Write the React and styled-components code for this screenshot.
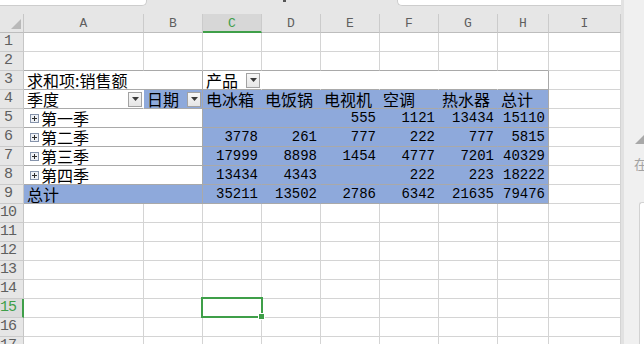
import React from 'react';
import styled, { createGlobalStyle } from 'styled-components';

const GRID = '#d4d4d4';
const PIV = '#a9a9a9';
const BLUE = '#8ea9db';
const GREEN = '#3f9f49';
const CLEAR = 'transparent';

const GlobalStyle = createGlobalStyle`
  html, body {
    margin: 0;
    padding: 0;
    background: #ffffff;
    overflow: hidden;
  }
`;

const Screen = styled.div`
  display: flex;
  width: 644px;
  height: 344px;
  overflow: hidden;
  font-family: 'Noto Sans CJK SC', sans-serif;
`;

const SheetArea = styled.div`
  display: flex;
  flex-direction: column;
  width: 621px;
  flex: none;
`;

const TopStrip = styled.div`
  display: flex;
  align-items: flex-start;
  height: 14px;
  background: #e6e6e6;
  flex: none;
`;

const TabBox = styled.div`
  height: 5px;
  width: ${p => (p.$width ? `${p.$width}px` : 'auto')};
  flex: ${p => (p.$width ? 'none' : '1')};
  background: #fff;
  border-bottom: 1px solid #cdcdcd;
  border-${p => p.$side}: 1px solid #cdcdcd;
  border-bottom-${p => p.$side}-radius: 5px;
`;

const StripGap = styled.div`
  flex: 1;
  display: flex;
  justify-content: center;
  padding-left: 26px;
`;

const StripDot = styled.div`
  width: 3px;
  height: 2px;
  background: #555;
`;

const Grid = styled.div`
  display: grid;
  grid-template-columns: 24px 120px 59px 59px 59px 59px 59px 59px 51px 72px;
  grid-auto-rows: 19px;
`;

const Corner = styled.div`
  background: #e6e6e6;
  border-right: 1px solid #c6c6c6;
  border-bottom: 1px solid #bdbdbd;
  display: flex;
  align-items: flex-end;
  justify-content: flex-end;
  padding: 0 2px 3px 0;
`;

const ColHead = styled.div`
  background: ${p => (p.$active ? '#d7d7d7' : '#e6e6e6')};
  border-right: 1px solid #cbcbcb;
  border-bottom: ${p => (p.$active ? `2px solid ${GREEN}` : '1px solid #bdbdbd')};
  color: ${p => (p.$active ? GREEN : '#5f5f5f')};
  font-family: 'Liberation Mono', monospace;
  font-size: 13px;
  display: flex;
  align-items: center;
  justify-content: center;
  padding-top: 1px;
`;

const RowHead = styled.div`
  background: ${p => (p.$active ? '#dcdcdc' : '#e6e6e6')};
  border-right: ${p => (p.$active ? `2px solid ${GREEN}` : '1px solid #c6c6c6')};
  border-bottom: 1px solid #cbcbcb;
  color: ${p => (p.$active ? GREEN : '#5f5f5f')};
  font-family: 'Liberation Mono', monospace;
  font-size: 15px;
  line-height: 18px;
  display: flex;
  align-items: center;
  justify-content: center;
  padding-right: ${p => (p.$active ? 6 : 7)}px;
  letter-spacing: -1px;
  overflow: hidden;
`;

const Cell = styled.div`
  grid-column: span ${p => p.$span || 1};
  position: relative;
  display: flex;
  align-items: center;
  justify-content: ${p => (p.$num ? 'flex-end' : p.$drop ? 'space-between' : 'flex-start')};
  background: ${p => (p.$blue ? BLUE : '#ffffff')};
  border-right: 1px solid ${p => p.$r || GRID};
  border-bottom: 1px solid ${p => p.$b || GRID};
  padding: 0 ${p => (p.$drop ? 1 : 3)}px 0 ${p => (p.$indent ? 6 : 3)}px;
  font-size: ${p => (p.$num ? '14px' : '16px')};
  font-family: ${p =>
    p.$num ? "'Liberation Mono', monospace" : "'Noto Sans CJK SC', sans-serif"};
  color: #000;
  line-height: 18px;
  white-space: nowrap;
`;

const Label = styled.span`
  margin-left: ${p => p.$gap || 0}px;
`;

const DropButton = styled.div`
  width: 14px;
  height: 15px;
  flex: none;
  box-sizing: border-box;
  border: 1px solid #a2a2a2;
  background: linear-gradient(#f7f7f7, #e6e6e6);
  display: flex;
  align-items: center;
  justify-content: center;
`;

const Selection = styled.div`
  position: absolute;
  top: -2px;
  left: -2px;
  right: -2px;
  bottom: -1px;
  border: 2px solid ${GREEN};
  z-index: 2;
  pointer-events: none;
`;

const FillHandle = styled.div`
  position: absolute;
  right: -4px;
  bottom: -4px;
  width: 5px;
  height: 5px;
  background: ${GREEN};
  border: 1px solid #fff;
`;

const SidePanel = styled.div`
  flex: 1;
  display: flex;
  flex-direction: column;
  background: #f0f0f0;
  border-left: 3px solid #e2e2e2;
  padding-left: 10px;
  overflow: hidden;
`;

const PanelTri = styled.svg`
  margin-top: 135px;
  margin-left: 1px;
  flex: none;
`;

const PanelHint = styled.div`
  margin-top: 12px;
  font-size: 13px;
  line-height: 15px;
  color: #a3a3a3;
  white-space: nowrap;
`;

const PanelBox = styled.div`
  margin-top: 31px;
  margin-left: 5px;
  flex: 1;
  background: #fff;
  border-left: 1px solid #d2d2d2;
  border-top: 1px solid #d2d2d2;
  border-top-left-radius: 3px;
`;

const letters = ['A', 'B', 'C', 'D', 'E', 'F', 'G', 'H', 'I'];
const products = ['电冰箱', '电饭锅', '电视机', '空调', '热水器', '总计'];
const quarters = [
  ['第一季', ['', '', '555', '1121', '13434', '15110']],
  ['第二季', ['3778', '261', '777', '222', '777', '5815']],
  ['第三季', ['17999', '8898', '1454', '4777', '7201', '40329']],
  ['第四季', ['13434', '4343', '', '222', '223', '18222']],
];
const totals = ['35211', '13502', '2786', '6342', '21635', '79476'];

function Drop() {
  return (
    <DropButton>
      <svg width="7" height="4" viewBox="0 0 7 4">
        <polygon points="0,0 7,0 3.5,4" fill="#3a3a3a" />
      </svg>
    </DropButton>
  );
}

function Expand() {
  return (
    <svg width="9" height="9" viewBox="0 0 9 9" style={{ flex: 'none' }}>
      <rect x="0.5" y="0.5" width="8" height="8" fill="#eef1f6" stroke="#8593ab" />
      <path d="M2 4.5h5M4.5 2v5" stroke="#2b2b2b" strokeWidth="1" />
    </svg>
  );
}

function PlainRow({ n, pivotTop }) {
  return letters.map((l, i) => (
    <Cell key={l} $b={pivotTop && i < 8 ? PIV : GRID}>
      {n === 15 && l === 'C' && (
        <Selection>
          <FillHandle />
        </Selection>
      )}
    </Cell>
  ));
}

function ValueCells({ values }) {
  return values.map((v, i) => (
    <Cell key={i} $blue $num $r={i === 5 ? PIV : CLEAR} $b={PIV}>
      {v}
    </Cell>
  ));
}

function renderRow(n) {
  if (n === 3) {
    return (
      <>
        <Cell $span={2} $r={PIV} $b={PIV}>求和项:销售额</Cell>
        <Cell $drop $r={CLEAR} $b={PIV}>
          产品
          <Drop />
        </Cell>
        {[0, 1, 2, 3].map(i => (
          <Cell key={i} $r={CLEAR} $b={PIV} />
        ))}
        <Cell $r={PIV} $b={PIV} />
        <Cell />
      </>
    );
  }
  if (n === 4) {
    return (
      <>
        <Cell $drop $r={CLEAR} $b={PIV}>
          季度
          <Drop />
        </Cell>
        <Cell $drop $blue $r={PIV} $b={PIV}>
          日期
          <Drop />
        </Cell>
        {products.map((p, i) => (
          <Cell key={p} $blue $r={i === 5 ? PIV : CLEAR} $b={PIV}>
            {p}
          </Cell>
        ))}
        <Cell />
      </>
    );
  }
  if (n >= 5 && n <= 8) {
    const [name, values] = quarters[n - 5];
    return (
      <>
        <Cell $span={2} $indent $r={PIV} $b={PIV}>
          <Expand />
          <Label $gap={2}>{name}</Label>
        </Cell>
        <ValueCells values={values} />
        <Cell />
      </>
    );
  }
  if (n === 9) {
    return (
      <>
        <Cell $span={2} $blue $r={PIV} $b={PIV}>总计</Cell>
        <ValueCells values={totals} />
        <Cell />
      </>
    );
  }
  return <PlainRow n={n} pivotTop={n === 2} />;
}

export default function App() {
  const rows = Array.from({ length: 17 }, (_, i) => i + 1);
  return (
    <>
      <GlobalStyle />
      <Screen>
        <SheetArea>
          <TopStrip>
            <TabBox $width={146} $side="right" />
            <StripGap>
              <StripDot />
            </StripGap>
            <TabBox $side="left" />
          </TopStrip>
          <Grid>
            <Corner>
              <svg width="10" height="10" viewBox="0 0 10 10">
                <polygon points="10,0 10,10 0,10" fill="#b9b9b9" />
              </svg>
            </Corner>
            {letters.map(l => (
              <ColHead key={l} $active={l === 'C'}>
                {l}
              </ColHead>
            ))}
            {rows.map(n => (
              <React.Fragment key={n}>
                <RowHead $active={n === 15}>{n}</RowHead>
                {renderRow(n)}
              </React.Fragment>
            ))}
          </Grid>
        </SheetArea>
        <SidePanel>
          <PanelTri width="9" height="9" viewBox="0 0 9 9">
            <polygon points="9,0 9,9 0,9" fill="#a8a8a8" />
          </PanelTri>
          <PanelHint>在</PanelHint>
          <PanelBox />
        </SidePanel>
      </Screen>
    </>
  );
}
